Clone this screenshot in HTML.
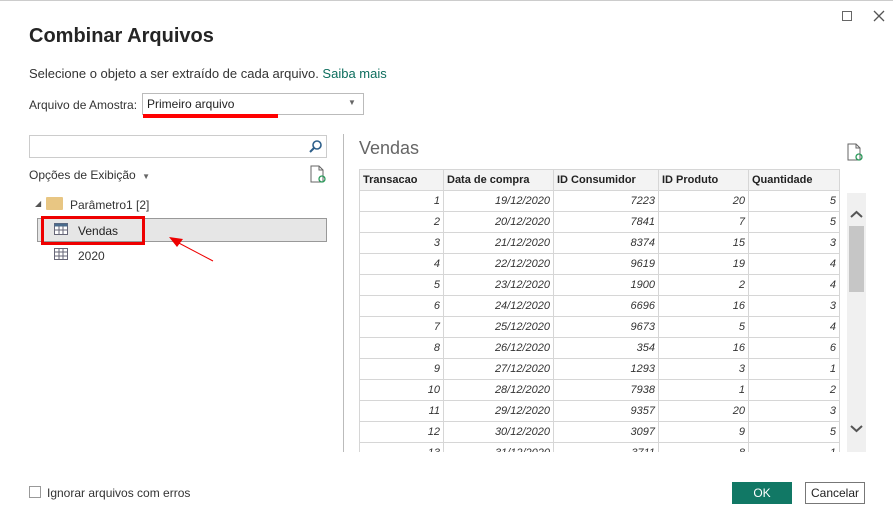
<!DOCTYPE html>
<html><head><meta charset="utf-8"><style>
*{margin:0;padding:0;box-sizing:border-box}
body{width:893px;height:514px;background:#fff;font-family:"Liberation Sans",sans-serif;color:#333;position:relative;overflow:hidden;border-top:1px solid #ccc}
.a{position:absolute;white-space:nowrap}
table{border-collapse:collapse;font-size:11px;table-layout:fixed}
td,th{border:1px solid #d6d6d6;height:21px;padding:0 3px}
th{background:#f3f3f3;text-align:left;font-weight:bold;color:#222}
td{text-align:right;font-style:italic;color:#333}
</style></head><body>
<div class="a" style="left:842px;top:10px;width:10px;height:10px;border:1px solid #666"></div>
<svg class="a" style="left:873px;top:9px" width="12" height="12"><path d="M1 1L11 11M11 1L1 11" stroke="#555" stroke-width="1.3"/></svg>
<div class="a" style="left:29px;top:24px;font-size:20px;font-weight:bold;color:#252525">Combinar Arquivos</div>
<div class="a" style="left:29px;top:65px;font-size:13px;color:#333">Selecione o objeto a ser extraído de cada arquivo. <span style="color:#0e6e5e">Saiba mais</span></div>
<div class="a" style="left:29px;top:97px;font-size:12px">Arquivo de Amostra:</div>
<div class="a" style="left:142px;top:92px;width:222px;height:22px;border:1px solid #bbb"></div>
<div class="a" style="left:147px;top:96px;font-size:12px;color:#222">Primeiro arquivo</div>
<div class="a" style="left:348px;top:97px;font-size:8px;color:#666">▼</div>
<div class="a" style="left:143px;top:113px;width:135px;height:4px;background:#f00"></div>
<div class="a" style="left:29px;top:134px;width:298px;height:23px;border:1px solid #ccc"></div>
<svg class="a" style="left:308px;top:138px" width="15" height="15"><circle cx="9" cy="6" r="4" fill="none" stroke="#2d5f8a" stroke-width="1.6"/><line x1="6" y1="9" x2="2" y2="13" stroke="#2d5f8a" stroke-width="2"/></svg>
<div class="a" style="left:29px;top:167px;font-size:12px">Opções de Exibição <span style="font-size:8px;color:#666;margin-left:3px">▼</span></div>
<svg class="a" style="left:310px;top:164px" width="17" height="20"><path d="M1 1H9L13 5V17H1Z" fill="#fff" stroke="#666"/><path d="M9 1V5H13" fill="none" stroke="#666"/><circle cx="12" cy="14" r="3" fill="none" stroke="#2a9a5a" stroke-width="1.3"/></svg>
<div class="a" style="left:35px;top:198px;font-size:8px;color:#555">◢</div>
<div class="a" style="left:46px;top:196px;width:17px;height:13px;background:#e8c683;border-radius:1px"></div>
<div class="a" style="left:70px;top:197px;font-size:12px">Parâmetro1 [2]</div>
<div class="a" style="left:37px;top:217px;width:290px;height:24px;background:#e6e6e6;border:1px solid #999"></div>
<div class="a" style="left:41px;top:215px;width:104px;height:29px;border:3px solid #e00"></div>
<svg class="a" style="left:54px;top:222px" width="14" height="12"><rect x="0.5" y="0.5" width="13" height="11" fill="#fff" stroke="#667"/><rect x="0.5" y="0.5" width="13" height="3" fill="#4a6b8c"/><path d="M0 7H14M5 3V12M9 3V12" stroke="#667"/></svg>
<div class="a" style="left:78px;top:223px;font-size:12px;color:#222">Vendas</div>
<svg class="a" style="left:54px;top:247px" width="14" height="13"><rect x="0.5" y="0.5" width="13" height="11" fill="#fff" stroke="#667"/><path d="M0 4H14M0 8H14M5 0V12M9 0V12" stroke="#667"/></svg>
<div class="a" style="left:78px;top:248px;font-size:12px">2020</div>
<svg class="a" style="left:165px;top:232px" width="50" height="30"><line x1="48" y1="28" x2="10" y2="8" stroke="#e00" stroke-width="1"/><path d="M4 4L18 6L12 14Z" fill="#e00"/></svg>
<div class="a" style="left:343px;top:133px;width:1px;height:318px;background:#bbb"></div>
<div class="a" style="left:359px;top:137px;font-size:18px;color:#666">Vendas</div>
<svg class="a" style="left:847px;top:142px" width="17" height="20"><path d="M1 1H9L13 5V17H1Z" fill="#fff" stroke="#666"/><path d="M9 1V5H13" fill="none" stroke="#666"/><circle cx="12" cy="14" r="3" fill="none" stroke="#2a9a5a" stroke-width="1.3"/></svg>
<div class="a" style="left:359px;top:168px;width:482px;height:283px;overflow:hidden">
<table style="width:481px"><colgroup><col style="width:84px"><col style="width:110px"><col style="width:105px"><col style="width:90px"><col style="width:91px"></colgroup>
<tr><th>Transacao</th><th>Data de compra</th><th>ID Consumidor</th><th>ID Produto</th><th>Quantidade</th></tr>
<tr><td>1</td><td>19/12/2020</td><td>7223</td><td>20</td><td>5</td></tr>
<tr><td>2</td><td>20/12/2020</td><td>7841</td><td>7</td><td>5</td></tr>
<tr><td>3</td><td>21/12/2020</td><td>8374</td><td>15</td><td>3</td></tr>
<tr><td>4</td><td>22/12/2020</td><td>9619</td><td>19</td><td>4</td></tr>
<tr><td>5</td><td>23/12/2020</td><td>1900</td><td>2</td><td>4</td></tr>
<tr><td>6</td><td>24/12/2020</td><td>6696</td><td>16</td><td>3</td></tr>
<tr><td>7</td><td>25/12/2020</td><td>9673</td><td>5</td><td>4</td></tr>
<tr><td>8</td><td>26/12/2020</td><td>354</td><td>16</td><td>6</td></tr>
<tr><td>9</td><td>27/12/2020</td><td>1293</td><td>3</td><td>1</td></tr>
<tr><td>10</td><td>28/12/2020</td><td>7938</td><td>1</td><td>2</td></tr>
<tr><td>11</td><td>29/12/2020</td><td>9357</td><td>20</td><td>3</td></tr>
<tr><td>12</td><td>30/12/2020</td><td>3097</td><td>9</td><td>5</td></tr>
<tr><td>13</td><td>31/12/2020</td><td>3711</td><td>8</td><td>1</td></tr>
</table></div>
<div class="a" style="left:847px;top:192px;width:19px;height:259px;background:#f0f0f0"></div>
<div class="a" style="left:849px;top:225px;width:15px;height:66px;background:#c6c6c6"></div>
<svg class="a" style="left:849px;top:207px" width="15" height="12"><path d="M2 9L7.5 4L13 9" fill="none" stroke="#555" stroke-width="2"/></svg>
<svg class="a" style="left:849px;top:422px" width="15" height="12"><path d="M2 3L7.5 8L13 3" fill="none" stroke="#555" stroke-width="2"/></svg>
<div class="a" style="left:29px;top:485px;width:12px;height:12px;border:1px solid #999"></div>
<div class="a" style="left:47px;top:485px;font-size:12px">Ignorar arquivos com erros</div>
<div class="a" style="left:732px;top:481px;width:60px;height:22px;background:#117865;color:#fff;font-size:12px;text-align:center;line-height:22px">OK</div>
<div class="a" style="left:805px;top:481px;width:60px;height:22px;border:1px solid #777;font-size:12px;text-align:center;line-height:20px;color:#222">Cancelar</div>
</body></html>
